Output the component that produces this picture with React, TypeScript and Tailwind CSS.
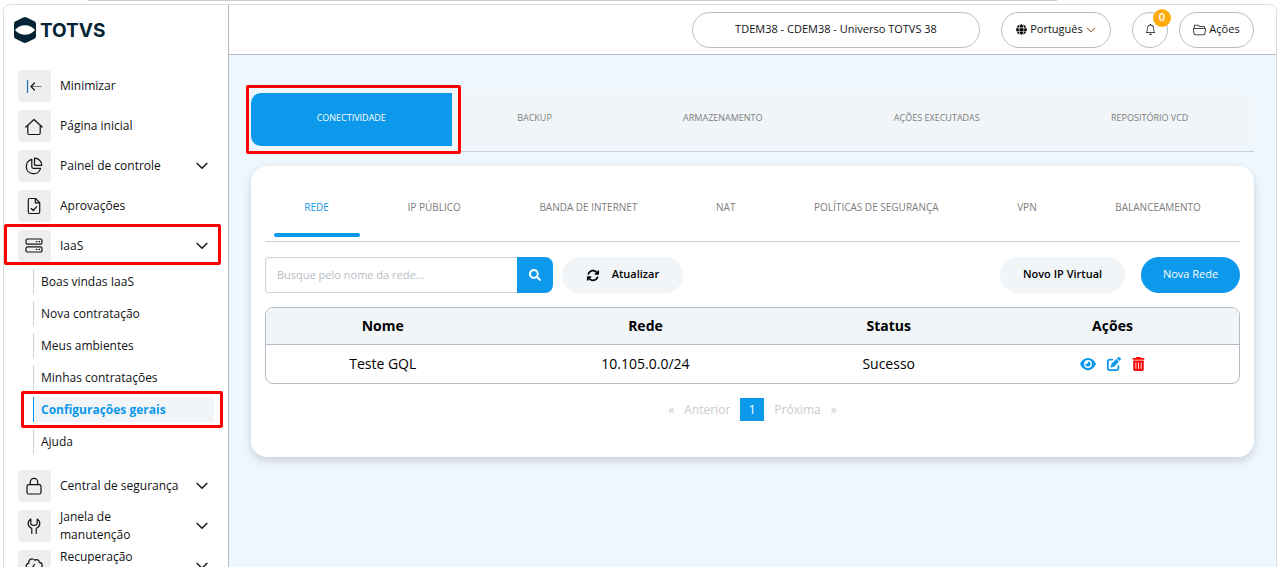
import type { ReactNode } from "react";
import clsx from "clsx";
import { BsBell, BsChevronDown, BsFolder2Open } from "react-icons/bs";
import { FaGlobe, FaSearch } from "react-icons/fa";
import { FaArrowsRotate, FaEye, FaPenToSquare, FaTrashCan } from "react-icons/fa6";

type MenuItem = { label: string; icon: ReactNode; expandable?: boolean };

function Glyph({ children }: { children: ReactNode }) {
  return (
    <svg
      viewBox="0 0 20 20"
      fill="none"
      stroke="currentColor"
      strokeWidth="1.2"
      strokeLinecap="round"
      strokeLinejoin="round"
      aria-hidden
      className="w-5 h-5"
    >
      {children}
    </svg>
  );
}

const MAIN_MENU: MenuItem[] = [
  {
    label: "Minimizar",
    icon: (
      <Glyph>
        <path d="M3.5 4.5v12" stroke="#1b6fb5" />
        <path d="M17 10.5H7.5" stroke="#777" />
        <path d="M10.5 7 7 10.5l3.5 3.5" />
      </Glyph>
    ),
  },
  {
    label: "Página inicial",
    icon: (
      <Glyph>
        <path d="M1.8 11 10 3.5l8.2 7.5M3.8 9.5V17c0 1 .5 1.5 1.5 1.5h9.4c1 0 1.5-.5 1.5-1.5V9.5" />
      </Glyph>
    ),
  },
  {
    label: "Painel de controle",
    icon: (
      <Glyph>
        <path d="M7.8 3.3a7.3 7.3 0 1 0 8.8 9H9.300c-1 0-1.500-.5-1.500-1.500z" />
        <path d="M10.500 2.200v6.300c0 .5.3.8.8.8h6.500a7.300 7.300 0 0 0-7.300-7.100z" />
      </Glyph>
    ),
    expandable: true,
  },
  {
    label: "Aprovações",
    icon: (
      <Glyph>
        <path d="M11.5 2.5H5.8c-1 0-1.5.5-1.5 1.5v12c0 1 .5 1.5 1.5 1.5h8.4c1 0 1.5-.5 1.5-1.5V6.7zM11.3 2.7v4.2h4.2M7.3 12.5l2 2 3.4-3.8" />
      </Glyph>
    ),
  },
];

const IAAS_ITEM: MenuItem = {
  label: "IaaS",
  icon: (
    <Glyph>
      <rect x="2" y="3" width="16" height="5.2" rx="1.6" />
      <rect x="2" y="10.8" width="16" height="5.2" rx="1.6" />
      <path d="M12.3 5.6h.6M15 5.6h.6M12.3 13.4h.6M15 13.4h.6" />
    </Glyph>
  ),
  expandable: true,
};

const IAAS_LINKS = [
  "Boas vindas IaaS",
  "Nova contratação",
  "Meus ambientes",
  "Minhas contratações",
  "Configurações gerais",
  "Ajuda",
];

const BOTTOM_MENU: MenuItem[] = [
  {
    label: "Central de segurança",
    icon: (
      <Glyph>
        <rect x="3" y="8.6" width="14" height="9.4" rx="1.8" />
        <path d="M6.3 8.4V6a3.7 3.7 0 0 1 7.4 0v2.4" />
      </Glyph>
    ),
    expandable: true,
  },
  {
    label: "Janela de manutenção",
    icon: (
      <Glyph>
        <path d="M7.8 17.5v-5C3.4 10.8 3 5.5 6.8 3v4.6c0 2.4 6.4 2.4 6.4 0V3c3.8 2.5 3.4 7.8-1 9.5v5" />
      </Glyph>
    ),
    expandable: true,
  },
  {
    label: "Recuperação",
    icon: (
      <Glyph>
        <path d="M5.5 12.5C2.5 12.5 1.7 10 2.6 8.6 3.2 7.7 4 7.4 4.7 7.4 4.2 4.5 6.5 2.7 8.7 3c1 .1 1.8.6 2.3 1.3 1.5-1.3 4.2-.4 4.3 2 1.6.1 2.9 1.5 2.9 3.2 0 1.8-1.2 3-3.2 3M10.5 8.5 8 12h3.500l-2 3.500" />
      </Glyph>
    ),
    expandable: true,
  },
];

const TABS = [
  "CONECTIVIDADE",
  "BACKUP",
  "ARMAZENAMENTO",
  "AÇÕES EXECUTADAS",
  "REPOSITÓRIO VCD",
];

const SUB_TABS = [
  "REDE",
  "IP PÚBLICO",
  "BANDA DE INTERNET",
  "NAT",
  "POLÍTICAS DE SEGURANÇA",
  "VPN",
  "BALANCEAMENTO",
];

const NETWORKS = [{ name: "Teste GQL", cidr: "10.105.0.0/24", status: "Sucesso" }];

function Highlight({ className }: { className: string }) {
  return (
    <span
      aria-hidden
      className={clsx(
        "absolute z-10 border-3 border-[#ff0000] rounded-xs pointer-events-none",
        className,
      )}
    />
  );
}

function Logo() {
  return (
    <a href="#" className="flex items-center gap-1 pl-[10px] h-[50px] text-[#042435]">
      <svg viewBox="0 0 22 26" className="w-[22px] h-[26px]" aria-hidden>
        <path
          fill="currentColor"
          d="M9.3.5a4 4 0 0 1 3.4 0l7.700 3.700A2.800 2.800 0 0 1 22 6.700v12.600c0 1.100-.6 2-1.600 2.500l-7.700 3.700a4 4 0 0 1-3.400 0l-7.700-3.700A2.800 2.800 0 0 1 0 19.300V6.700c0-1.100.6-2 1.600-2.500z"
        />
        <path fill="#fff" d="M1 13c2.5-3 6-4.800 10-4.800S18.500 10 21 13c-2.500 3-6 4.800-10 4.800S3.500 16 1 13z" />
      </svg>
      <span className="font-['Inter',sans-serif] text-[19px] font-bold leading-none">
        TOTVS
      </span>
    </a>
  );
}

function MenuRow({ label, icon, expandable }: MenuItem) {
  return (
    <button type="button" className="flex items-center w-full h-10 pl-[14px] pr-5 text-left">
      <span className="flex items-center justify-center shrink-0 w-[33px] h-8 pr-px rounded bg-[#eeeeee]">
        {icon}
      </span>
      <span
        className={clsx(
          "ml-[9px] w-[124px] leading-[18px]",
          label === "Recuperação" && "h-9",
        )}
      >
        {label}
      </span>
      {expandable && (
        <svg
          viewBox="0 0 12 8"
          fill="none"
          stroke="currentColor"
          strokeWidth="1.4"
          className="w-3 h-2 ml-auto shrink-0"
          aria-hidden
        >
          <path d="M.7 1 6 6.3 11.3 1" />
        </svg>
      )}
    </button>
  );
}

function Sidebar() {
  return (
    <aside className="w-[225px] shrink-0 bg-white border-r border-[#b6bcc6] overflow-hidden">
      <Logo />
      <nav className="pt-[11px]">
        {MAIN_MENU.map((item) => (
          <MenuRow key={item.label} {...item} />
        ))}
        <div className="relative">
          <MenuRow {...IAAS_ITEM} />
          <Highlight className="-top-[2px] left-0 right-[7px] h-[41px]" />
        </div>
        <ul className="flex flex-col gap-[7px] pt-[3px] pb-3 pl-[29px] pr-[14px]">
          {IAAS_LINKS.map((label) => {
            const active = label === "Configurações gerais";
            return (
              <li key={label} className="relative">
                <a
                  href="#"
                  className={clsx(
                    "flex items-center h-[25px] pl-[7px] border-l",
                    active
                      ? "border-[#0c98eb] bg-[#f1f5f8] text-[#0c98eb] font-bold"
                      : "border-[#cdd0d4]",
                  )}
                >
                  {label}
                </a>
                {active && <Highlight className="-inset-y-[6px] -left-3 -right-[9px]" />}
              </li>
            );
          })}
        </ul>
        {BOTTOM_MENU.map((item) => (
          <MenuRow key={item.label} {...item} />
        ))}
      </nav>
    </aside>
  );
}

const pill =
  "flex items-center justify-center h-9 rounded-full border border-[#b6bcc6] bg-white";

function Header() {
  return (
    <header className="flex items-center justify-end h-[50px] pr-[22px] border-b border-[#b6bcc6] bg-white text-[11px]">
      <button type="button" className={clsx(pill, "w-[288px]")}>
        TDEM38 - CDEM38 - Universo TOTVS 38
      </button>
      <button type="button" className={clsx(pill, "w-[110px] ml-[21px] gap-[3px]")}>
        <FaGlobe className="w-[11px] h-[11px] text-black" />
        Português
        <BsChevronDown className="w-[10px] h-[10px] text-[#8a4b1c]" strokeWidth={0.5} />
      </button>
      <button
        type="button"
        aria-label="Notificações"
        className={clsx(pill, "relative w-9 ml-[21px]")}
      >
        <BsBell className="w-[11px] h-[11px]" />
        <span className="absolute -top-1 -right-1 flex items-center justify-center w-[18px] h-[18px] rounded-full bg-[#ffab10] text-white font-semibold">
          0
        </span>
      </button>
      <button type="button" className={clsx(pill, "w-[75px] ml-[11px] gap-[3px]")}>
        <BsFolder2Open className="w-[13px] h-[13px]" />
        Ações
      </button>
    </header>
  );
}

function ServiceTabs() {
  return (
    <div className="pb-[5px] border-b border-[#cdd1d5]">
      <div className="flex h-[53px] rounded-[10px] bg-[#f1f5f8] text-[9px] text-[#7d7d7d]">
        {TABS.map((tab, i) => (
          <button
            key={tab}
            type="button"
            className={clsx(
              "relative flex-auto pb-1",
              i === 0 && "rounded-l-[10px] bg-[#0c98eb] text-white",
            )}
          >
            {tab}
            {i === 0 && (
              <Highlight className="-top-2 -bottom-2 -left-[5px] -right-[9px]" />
            )}
          </button>
        ))}
      </div>
    </div>
  );
}

function SubTabs() {
  return (
    <div className="flex h-[76px] border-b border-[#cdd1d5] text-[10px] text-[#7d7d7d]">
      {SUB_TABS.map((tab, i) => (
        <button
          key={tab}
          type="button"
          className={clsx(
            "relative flex-auto pt-[9px]",
            i === 0 && "text-[#0c98eb]",
          )}
        >
          {tab}
          {i === 0 && (
            <span className="absolute bottom-1 left-[9px] right-2 h-1 rounded-full bg-[#0c98eb]" />
          )}
        </button>
      ))}
    </div>
  );
}

function Toolbar() {
  return (
    <div className="flex items-center mt-[15px] text-[11px] text-black">
      <form className="flex" onSubmit={(e) => e.preventDefault()}>
        <input
          type="text"
          aria-label="Busque pelo nome da rede"
          placeholder="Busque pelo nome da rede..."
          className="w-[252px] h-9 px-[11px] pb-[2px] border border-r-0 border-[#cdd1d8] rounded-l placeholder:text-[#b9bcbf]"
        />
        <button
          type="submit"
          aria-label="Buscar"
          className="flex items-center justify-center w-9 h-9 rounded-r-lg bg-[#0c98eb] text-white"
        >
          <FaSearch className="w-3 h-3" />
        </button>
      </form>
      <button
        type="button"
        className="flex items-center justify-center gap-3 w-[121px] h-9 ml-[9px] rounded-full bg-[#f1f5f8] font-semibold"
      >
        <FaArrowsRotate className="w-[14px] h-[13px]" />
        <span className="pb-[2px]">Atualizar</span>
      </button>
      <button
        type="button"
        className="w-[125px] h-9 pb-[2px] ml-auto rounded-full bg-[#f1f5f8] font-semibold"
      >
        Novo IP Virtual
      </button>
      <button
        type="button"
        className="w-[99px] h-9 pb-[2px] ml-4 rounded-full bg-[#0c98eb] text-white"
      >
        Nova Rede
      </button>
    </div>
  );
}

function NetworkTable() {
  return (
    <div className="mt-[14px] border border-[#b6bcc6] rounded-lg overflow-hidden">
      <table className="w-full table-fixed text-center text-sm text-black">
        <colgroup>
          <col className="w-[24%]" />
          <col className="w-[30%]" />
          <col className="w-[20%]" />
          <col className="w-[26%]" />
        </colgroup>
        <thead className="bg-[#f1f5f8]">
          <tr className="h-9 border-b border-[#b6bcc6]">
            <th>Nome</th>
            <th>Rede</th>
            <th>Status</th>
            <th>Ações</th>
          </tr>
        </thead>
        <tbody>
          {NETWORKS.map((net) => (
            <tr key={net.name} className="h-[39px]">
              <td>{net.name}</td>
              <td>{net.cidr}</td>
              <td>{net.status}</td>
              <td>
                <div className="flex items-center justify-center gap-[11px] text-[#0c98eb]">
                  <button type="button" aria-label="Visualizar">
                    <FaEye className="w-4 h-[14px]" />
                  </button>
                  <button type="button" aria-label="Editar">
                    <FaPenToSquare className="w-[14px] h-[14px]" />
                  </button>
                  <button type="button" aria-label="Excluir" className="text-[#ff0000]">
                    <FaTrashCan className="w-[13px] h-[14px]" />
                  </button>
                </div>
              </td>
            </tr>
          ))}
        </tbody>
      </table>
    </div>
  );
}

function Pagination() {
  return (
    <div className="flex items-center justify-center gap-[10px] mt-[14px] text-xs text-[#c9cbcd]">
      <button type="button" className="flex gap-[10px]">
        <span>«</span> Anterior
      </button>
      <button type="button" className="w-6 h-[23px] bg-[#0c98eb] text-white">
        1
      </button>
      <button type="button" className="flex gap-[10px]">
        Próxima <span>»</span>
      </button>
    </div>
  );
}

export default function App() {
  return (
    <div className="flex flex-col h-screen overflow-hidden bg-white font-['Open_Sans',sans-serif] text-xs text-[#101214]">
      <div className="h-px shrink-0 ml-[88px] mr-[222px] bg-[#cccccc]" />
      <div className="flex flex-1 min-h-0 mt-[3px] ml-[3px] mr-[2px] border border-b-0 border-[#dcdcdc] rounded-t-lg overflow-hidden">
        <Sidebar />
        <div className="flex flex-col flex-1 min-w-0 bg-[#eef6fe]">
          <Header />
          <main className="flex-1 pt-[38px] pl-[22px] pr-[22px]">
            <ServiceTabs />
            <section className="mt-[14px] px-[14px] pb-9 rounded-2xl bg-white shadow-[0_4px_10px_rgba(0,0,0,0.15)]">
              <SubTabs />
              <Toolbar />
              <NetworkTable />
              <Pagination />
            </section>
          </main>
        </div>
      </div>
    </div>
  );
}
